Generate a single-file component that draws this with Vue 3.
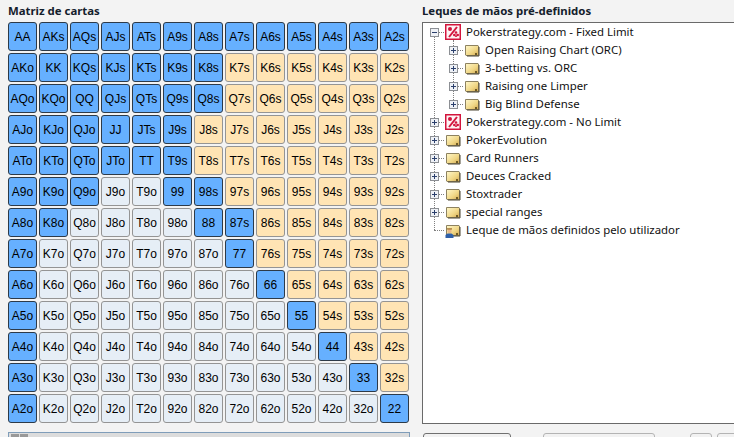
<script setup>
const ranks = ['A', 'K', 'Q', 'J', 'T', '9', '8', '7', '6', '5', '4', '3', '2']
// last blue column per row, suited side and offsuit side
const suitedEnd = [12, 6, 6, 5, 5, 6, 7, 7, 8, 9, 10, 11, 12]
const offEnd = [0, 1, 2, 3, 4, 2, 1, 0, 0, 0, 0, 0, 0]

const cells = []
ranks.forEach((r, row) => {
  ranks.forEach((c, col) => {
    let label, kind
    if (row === col) {
      label = r + c
      kind = 'on'
    } else if (col > row) {
      label = r + c + 's'
      kind = col <= suitedEnd[row] ? 'on' : 'suited'
    } else {
      label = c + r + 'o'
      kind = col <= offEnd[row] ? 'on' : 'off'
    }
    cells.push({ label, kind })
  })
})

const tree = [
  { text: 'Pokerstrategy.com - Fixed Limit', level: 0, icon: 'brand', box: 'minus' },
  { text: 'Open Raising Chart (ORC)', level: 1, icon: 'folder', box: 'plus' },
  { text: '3-betting vs. ORC', level: 1, icon: 'folder', box: 'plus' },
  { text: 'Raising one Limper', level: 1, icon: 'folder', box: 'plus' },
  { text: 'Big Blind Defense', level: 1, icon: 'folder', box: 'plus' },
  { text: 'Pokerstrategy.com - No Limit', level: 0, icon: 'brand', box: 'plus' },
  { text: 'PokerEvolution', level: 0, icon: 'folder', box: 'plus' },
  { text: 'Card Runners', level: 0, icon: 'folder', box: 'plus' },
  { text: 'Deuces Cracked', level: 0, icon: 'folder', box: 'plus' },
  { text: 'Stoxtrader', level: 0, icon: 'folder', box: 'plus' },
  { text: 'special ranges', level: 0, icon: 'folder', box: 'plus' },
  { text: 'Leque de mãos definidos pelo utilizador', level: 0, icon: 'user', box: '' }
]
</script>

<template>
  <div class="page">
    <section class="left">
      <h2 class="title">Matriz de cartas</h2>
      <div class="matrix">
        <div v-for="cell in cells" :key="cell.label" class="cell" :class="cell.kind">{{ cell.label }}</div>
      </div>
      <div class="hscroll">
        <span class="grip"></span>
        <span class="grip"></span>
      </div>
    </section>

    <section class="right">
      <h2 class="title">Leques de mãos pré-definidos</h2>
      <div class="tree">
        <span class="guide root"></span>
        <span class="guide sub"></span>
        <div v-for="item in tree" :key="item.text" class="row" :class="'level' + item.level">
          <span class="boxslot">
            <span class="dash"></span>
            <span v-if="item.box" class="box">
              <svg width="7" height="7" viewBox="0 0 7 7">
                <path d="M1 3.500h5" stroke="#2b3f6c" fill="none" />
                <path v-if="item.box === 'plus'" d="M3.500 1v5" stroke="#2b3f6c" fill="none" />
              </svg>
            </span>
          </span>
          <svg v-if="item.icon === 'brand'" class="icon" width="16" height="16" viewBox="0 0 16 16">
            <rect x="0.750" y="0.750" width="14.500" height="14.500" fill="#fdf3f4" stroke="#d3143c" stroke-width="1.500" />
            <path d="M12 3 4 13" stroke="#d3143c" stroke-width="2" fill="none" />
            <circle cx="5" cy="5" r="2" fill="#d3143c" />
            <circle cx="11" cy="8.500" r="1.300" fill="#d3143c" />
            <circle cx="9.300" cy="11" r="1.300" fill="#d3143c" />
            <circle cx="12.700" cy="11" r="1.300" fill="#d3143c" />
            <path d="M11 9.500l1 3.500h-2z" fill="#d3143c" />
          </svg>
          <svg v-else class="icon" width="16" height="16" viewBox="0 0 16 16">
            <defs>
              <linearGradient id="fold" x1="0" y1="0" x2="1" y2="1">
                <stop offset="0" stop-color="#fff8cc" />
                <stop offset="0.600" stop-color="#f0d684" />
                <stop offset="1" stop-color="#cfa650" />
              </linearGradient>
            </defs>
            <path d="M1.500 3.500h12.500l.5.5v9.500H2l-.5-.5z" fill="url(#fold)" stroke="#8d8260" />
            <path d="M15 5v9H3" stroke="#4d4632" fill="none" />
            <rect x="11" y="11" width="2" height="2" fill="#6f5a22" />
            <g v-if="item.icon === 'user'">
              <circle cx="4.500" cy="9" r="2.200" fill="#e9b98a" />
              <path d="M2 7.500h5V6.300H2z" fill="#9a6a2a" />
              <path d="M0.500 16v-3l2-1.500h4l2 1.500v3z" fill="#2f5fa8" />
            </g>
          </svg>
          <span class="label">{{ item.text }}</span>
        </div>
      </div>
      <div class="buttons">
        <span class="btn first"></span>
        <span class="btn second"></span>
        <span class="btn third"></span>
        <span class="btn fourth"></span>
      </div>
    </section>
  </div>
</template>

<style scoped>
.page {
  display: flex;
  width: 734px;
  height: 437px;
  overflow: hidden;
  background: #f3f3f3;
  font-family: "Noto Sans", "Liberation Sans", sans-serif;
  color: #000;
}

.left {
  width: 422px;
  flex: none;
  padding: 3px 0 0 8px;
  box-sizing: border-box;
}

.right {
  flex: 1;
  min-width: 0;
  padding-top: 3px;
}

.title {
  margin: 0;
  height: 19px;
  line-height: 15px;
  font-size: 11.400px;
  font-weight: 700;
  color: #14202c;
}

.matrix {
  display: grid;
  grid-template-columns: repeat(13, 29px);
  grid-auto-rows: 29px;
  gap: 2px;
}

.cell {
  display: flex;
  align-items: center;
  justify-content: center;
  box-sizing: border-box;
  border: 1px solid #949494;
  border-radius: 3px;
  font-family: "Liberation Sans", sans-serif;
  font-size: 12px;
  white-space: nowrap;
}

.cell.on {
  background: #66b0ff;
  border-color: #2d3a48;
}

.cell.suited {
  background: #ffe4b4;
}

.cell.off {
  background: #e6eef6;
}

.hscroll {
  display: flex;
  gap: 1px;
  width: 402px;
  height: 20px;
  margin-top: 9px;
  padding: 1px 0 0 2px;
  box-sizing: border-box;
  background: #dcdcdc;
  border: 1px solid #7f9db9;
}

.grip {
  width: 8px;
  height: 5px;
  background: #999;
}

.tree {
  position: relative;
  box-sizing: border-box;
  height: 402px;
  margin-right: -4px;
  background: #fff;
  border: 1px solid #6a6a6a;
}

.guide {
  position: absolute;
  width: 0;
  border-left: 1px dotted #808080;
}

.guide.root {
  left: 11px;
  top: 13px;
  height: 194px;
}

.guide.sub {
  left: 30px;
  top: 17px;
  height: 64px;
}

.row {
  display: flex;
  align-items: center;
  height: 18px;
  position: relative;
}

.row.level1 {
  padding-left: 19px;
}

.boxslot {
  position: relative;
  width: 22px;
  height: 18px;
  flex: none;
}

.dash {
  position: absolute;
  left: 11px;
  top: 9px;
  width: 10px;
  border-top: 1px dotted #808080;
}

.box {
  position: absolute;
  left: 7px;
  top: 5px;
  width: 9px;
  height: 9px;
  box-sizing: border-box;
  display: flex;
  align-items: center;
  justify-content: center;
  border: 1px solid #8c8f94;
  background: #eef1f6;
}

.box svg {
  flex: none;
}

.icon {
  flex: none;
}

.label {
  margin-left: 5px;
  padding-bottom: 2px;
  font-size: 11.400px;
  white-space: nowrap;
  color: #111;
}

.buttons {
  display: flex;
  margin-top: 9px;
  margin-left: 1px;
}

.btn {
  display: block;
  height: 24px;
  box-sizing: border-box;
  background: #f2f2f2;
  border: 1px solid #b4b4b4;
  border-radius: 3px;
  flex: none;
}

.btn.first {
  width: 88px;
  border-color: #707070;
}

.btn.second {
  width: 112px;
  margin-left: 32px;
}

.btn.third {
  width: 22px;
  margin-left: 35px;
}

.btn.fourth {
  width: 30px;
  margin-left: 5px;
}
</style>

<style>
html, body {
  margin: 0;
  background: #f3f3f3;
}
</style>
